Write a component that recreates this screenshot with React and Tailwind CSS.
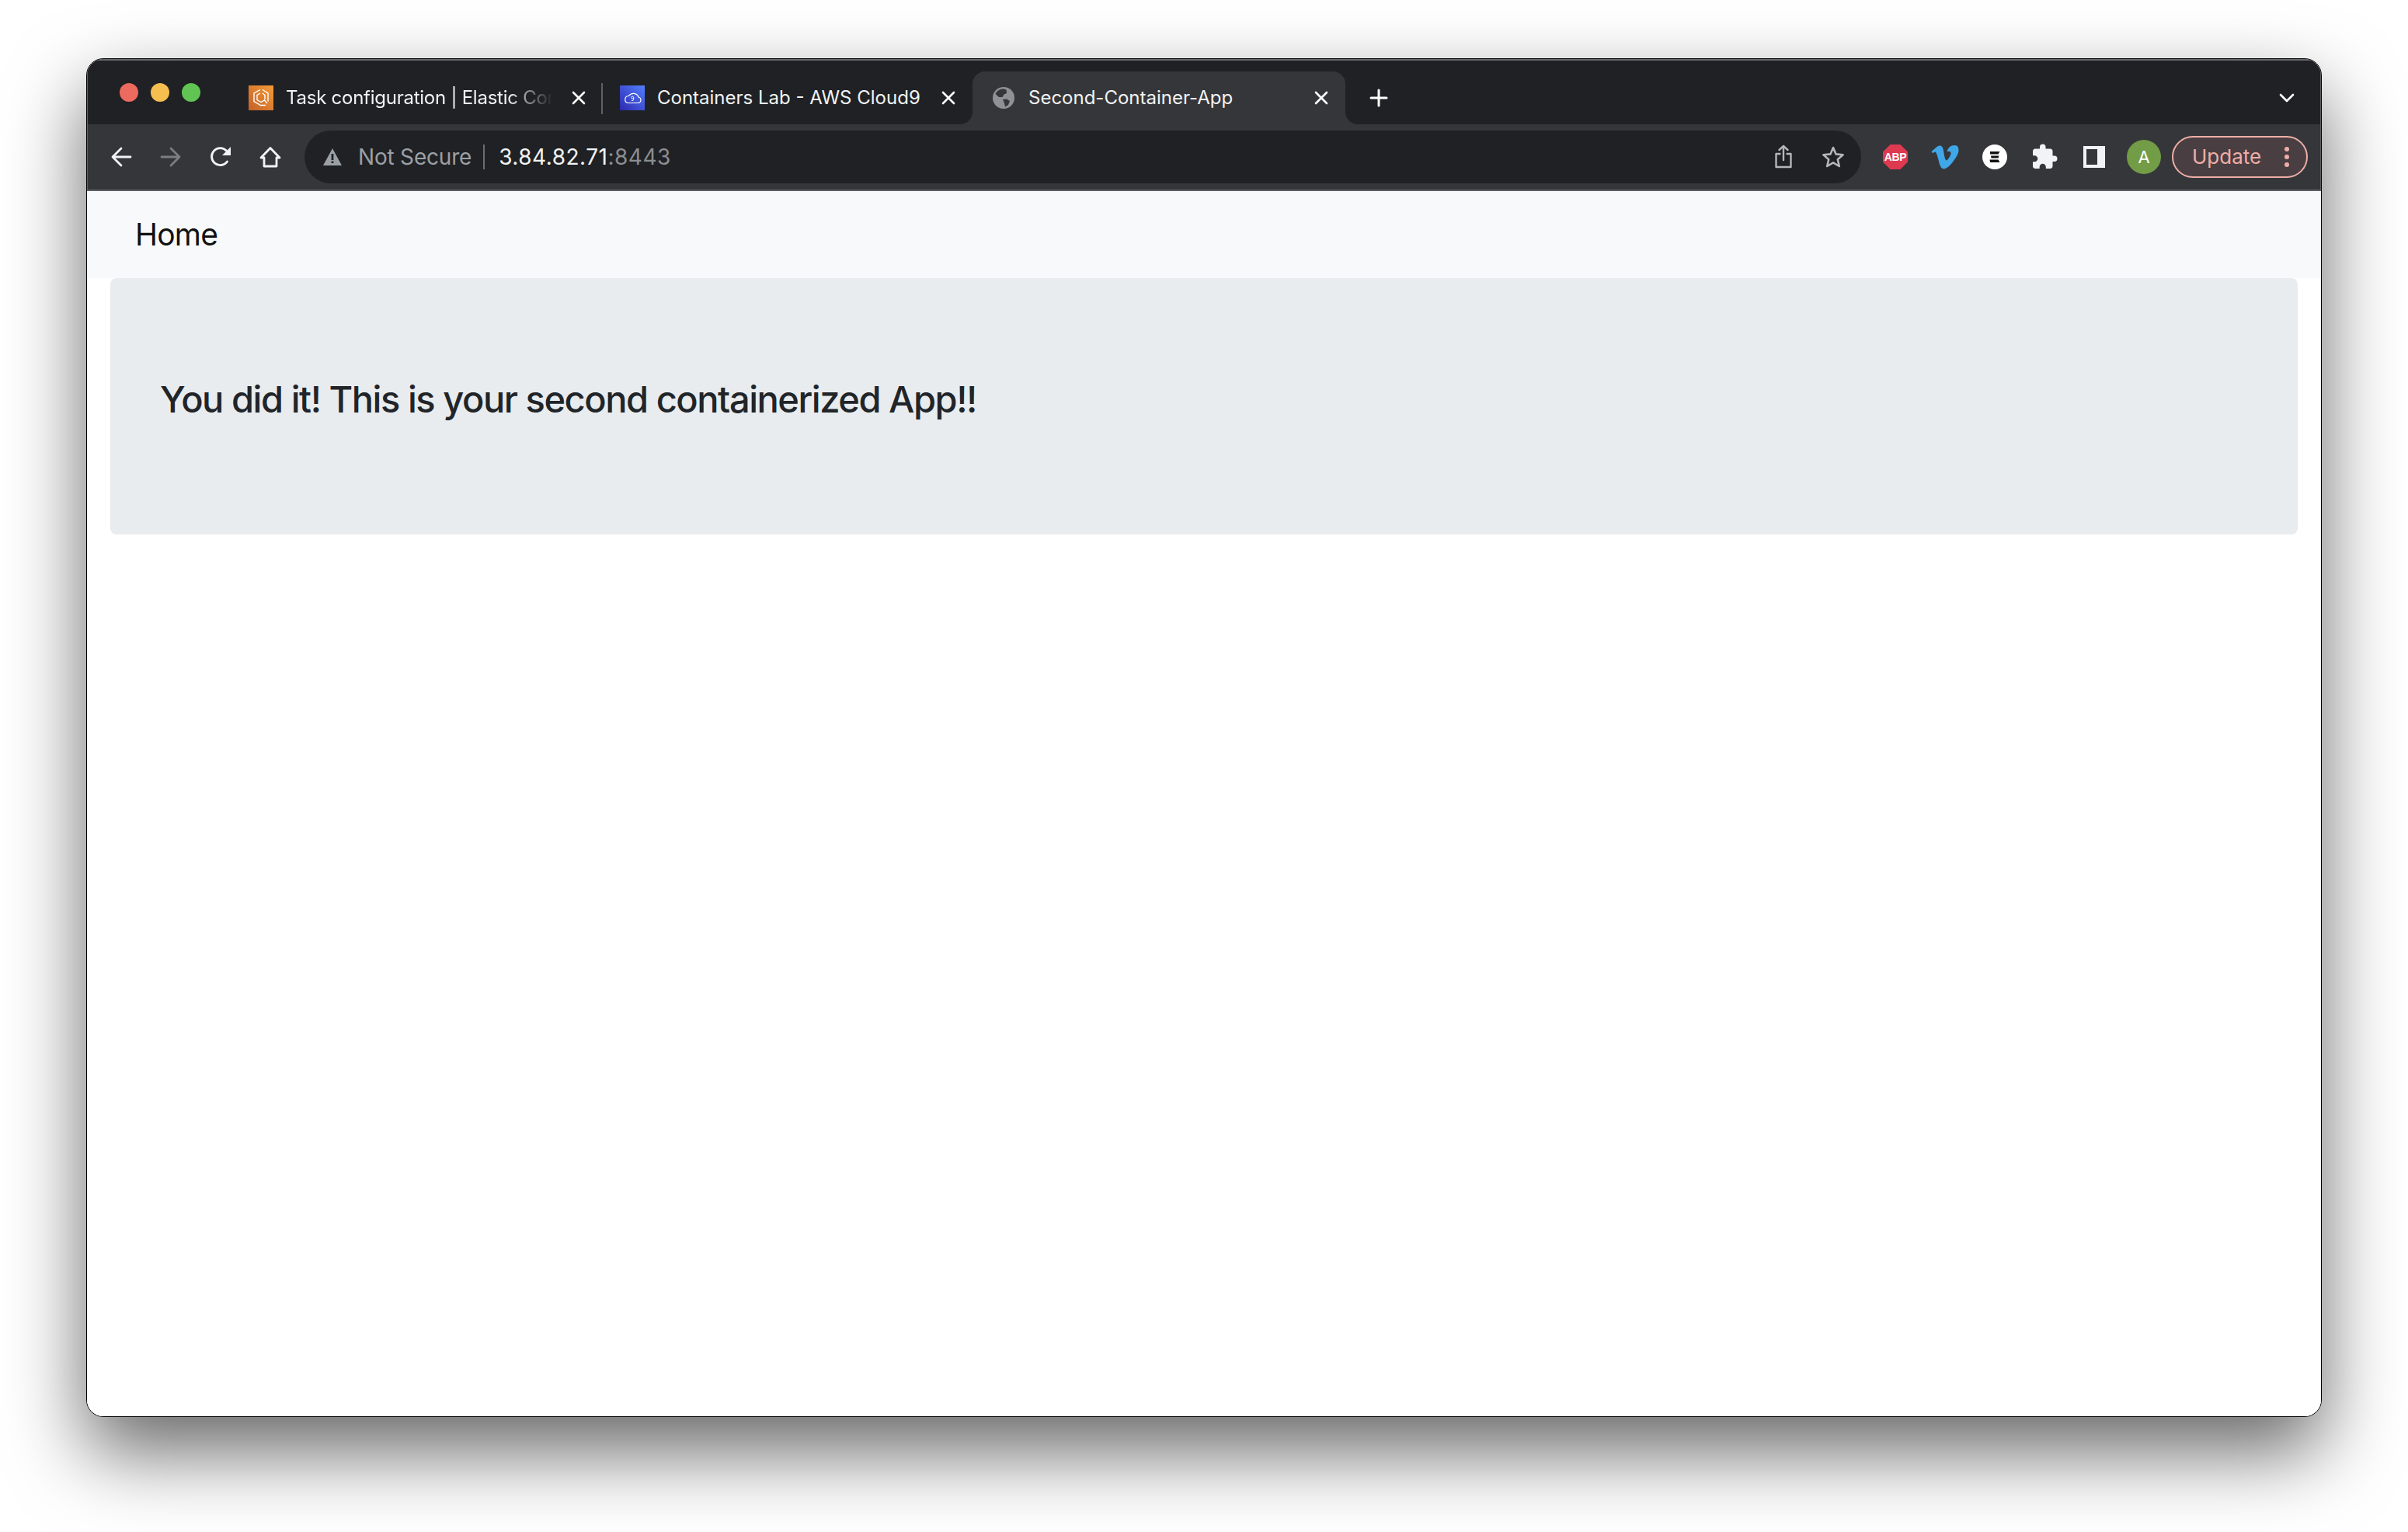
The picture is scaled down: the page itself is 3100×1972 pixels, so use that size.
import React from "react";
import { FaVimeoV } from "react-icons/fa";
import { MdExtension } from "react-icons/md";

const Close = ({ className = "" }) => (
  <svg viewBox="0 0 20 20" className={`w-5 h-5 shrink-0 ${className}`} fill="none" stroke="#fff" strokeWidth="2.6" strokeLinecap="round">
    <path d="M3 3 L17 17 M17 3 L3 17" />
  </svg>
);

const TaskIcon = () => (
  <svg viewBox="0 0 32 32" className="w-8 h-8 shrink-0">
    <defs>
      <linearGradient id="o" x1="0" y1="1" x2="1" y2="0">
        <stop offset="0" stopColor="#c4602a" />
        <stop offset="1" stopColor="#f39c36" />
      </linearGradient>
    </defs>
    <rect width="32" height="32" fill="url(#o)" />
    <path d="M15 5.5 L7 10 V20.5 L15.5 25.5 L22 25.5 M18 5.5 L25 10 V20.5" fill="none" stroke="#fff" strokeWidth="1.4" />
    <path d="M15 10 L11 12.5 V18.5 L16 21.5 L20.5 19 L24 23 M18 10 L21 12.5 V18" fill="none" stroke="#fff" strokeWidth="1.4" />
  </svg>
);

const CloudIcon = () => (
  <svg viewBox="0 0 32 32" className="w-8 h-8 shrink-0">
    <defs>
      <linearGradient id="b" x1="0" y1="1" x2="1" y2="0">
        <stop offset="0" stopColor="#2e27ad" />
        <stop offset="1" stopColor="#527fff" />
      </linearGradient>
    </defs>
    <rect width="32" height="32" fill="url(#b)" />
    <path d="M10 22.5 H23 A3.8 3.8 0 0 0 24 15 A7 7 0 0 0 11.5 13.5 A4.6 4.6 0 0 0 10 22.5 Z" fill="none" stroke="#fff" strokeWidth="1.2" />
    <circle cx="16.2" cy="15.6" r="1.5" fill="none" stroke="#fff" strokeWidth="0.9" />
    <path d="M17.7 15.6 V18 Q17.5 20 15 19.6" fill="none" stroke="#fff" strokeWidth="0.9" />
  </svg>
);

const Globe = () => (
  <svg viewBox="0 0 28 28" className="w-7 h-7 shrink-0">
    <circle cx="14" cy="14" r="14" fill="#8e9196" />
    <path d="M12 2.5 C8 3 5 5.5 3.5 9 L8 13 L12.5 13 L14.5 9.5 L18 8 L17.5 3.5 C16 2.8 14 2.3 12 2.5 Z" fill="#35363a" />
    <path d="M13 16 L18 15.5 L22 18 L20 23 L16 25.5 L15 21 Z" fill="#35363a" />
  </svg>
);

function Tab({ icon, text, w, pl, gap, fade, active }) {
  return (
    <div className={`relative flex items-center h-[68px] ${w} ${pl} ${active ? "bg-[#35363a] rounded-t-2xl" : ""}`}>
      {active && (
        <>
          <span className="absolute bottom-0 -left-4 w-4 h-4 bg-[radial-gradient(circle_at_0_0,#202124_15.5px,#35363a_16.5px)]" />
          <span className="absolute bottom-0 -right-4 w-4 h-4 bg-[radial-gradient(circle_at_100%_0,#202124_15.5px,#35363a_16.5px)]" />
        </>
      )}
      {icon}
      <span className={`flex-1 min-w-0 whitespace-nowrap overflow-hidden text-[24px] leading-8 text-[#f1f3f4] ${gap} ${fade ? "tracking-[-0.25px] [mask-image:linear-gradient(to_right,black_80%,transparent_97%)]" : ""}`}>
        {text}
      </span>
      <Close className="ml-3 mr-[21px]" />
    </div>
  );
}

const Tool = ({ children }) => (
  <div className="w-16 h-16 flex items-center justify-center shrink-0">{children}</div>
);

export default function App() {
  return (
    <div className="w-[3100px] h-[1972px] pl-[111px] pt-[75px] bg-white overflow-hidden font-['Inter','Liberation_Sans',sans-serif]">
      <div className="w-[2878px] h-[1749px] rounded-[22px] border border-black bg-white overflow-hidden flex flex-col shadow-[0_44px_100px_rgba(0,0,0,0.6)]">
        {/* tab strip */}
        <div className="h-[84px] shrink-0 bg-[#202124] border-t-2 border-[#66676a] shadow-[inset_1px_0_#5f6064,inset_-1px_0_#5f6064] flex items-end relative">
          <div className="flex gap-4 pl-[42px] w-[184px] self-start pt-[29px] shrink-0">
            <span className="w-6 h-6 rounded-full bg-[#ed6a5e] shrink-0" />
            <span className="w-6 h-6 rounded-full bg-[#f4bf4f] shrink-0" />
            <span className="w-6 h-6 rounded-full bg-[#61c554] shrink-0" />
          </div>
          <Tab icon={<TaskIcon />} text="Task configuration | Elastic Con" w="w-[480px]" pl="pl-6" gap="ml-4" fade />
          <div className="w-[2px] h-10 bg-[#5f6064] self-end mb-[13px] -ml-[2px] shrink-0" />
          <Tab icon={<CloudIcon />} text="Containers Lab - AWS Cloud9" w="w-[476px]" pl="pl-[22px]" gap="ml-4" />
          <Tab icon={<Globe />} text="Second-Container-App" w="w-[480px]" pl="pl-[26px]" gap="ml-[18px]" active />
          <svg viewBox="0 0 24 24" className="w-6 h-6 ml-[31px] mb-[22px] shrink-0" fill="none" stroke="#fff" strokeWidth="3" strokeLinecap="round">
            <path d="M12 2 V22 M2 12 H22" />
          </svg>
          <div className="flex-1" />
          <svg viewBox="0 0 20 12" className="w-5 h-3 mr-[34px] mb-[28px] shrink-0" fill="none" stroke="#fff" strokeWidth="2.6" strokeLinecap="round" strokeLinejoin="round">
            <path d="M2 2 L10 10 L18 2" />
          </svg>
        </div>
        {/* toolbar */}
        <div className="h-[86px] shrink-0 bg-[#35363a] border-b-2 border-[#5f6064] shadow-[inset_1px_0_#5f6064,inset_-1px_0_#5f6064] flex items-center pl-3">
          <Tool>
            <svg viewBox="0 0 28 28" className="w-7 h-7" fill="none" stroke="#f1f3f4" strokeWidth="2.8" strokeLinecap="round" strokeLinejoin="round">
              <path d="M26 14 H3 M14 3 L3 14 L14 25" />
            </svg>
          </Tool>
          <Tool>
            <svg viewBox="0 0 28 28" className="w-7 h-7" fill="none" stroke="#7b7d81" strokeWidth="2.8" strokeLinecap="round" strokeLinejoin="round">
              <path d="M2 14 H25 M14 3 L25 14 L14 25" />
            </svg>
          </Tool>
          <Tool>
            <svg viewBox="0 0 28 28" className="w-7 h-7" fill="none">
              <path d="M22.5 20 A11 11 0 1 1 21.5 6" stroke="#f1f3f4" strokeWidth="2.8" strokeLinecap="round" />
              <path d="M27 1 V12 H16 Z" fill="#f1f3f4" />
            </svg>
          </Tool>
          <Tool>
            <svg viewBox="0 0 28 28" className="w-7 h-7" fill="none" stroke="#f1f3f4" strokeWidth="2.8" strokeLinejoin="round">
              <path d="M14 2.5 L26 15 H22 V26 H6 V15 H2 Z" />
            </svg>
          </Tool>
          <div className="ml-3 w-[2004px] h-[68px] rounded-full bg-[#202124] flex items-center pl-6 shrink-0">
            <svg viewBox="0 0 24 22" className="w-6 h-[22px] shrink-0">
              <path d="M12 0 L24 22 H0 Z" fill="#9aa0a6" />
              <path d="M10.6 7 H13.4 V15 H10.6 Z M10.6 16.5 H13.4 V19 H10.6 Z" fill="#202124" />
            </svg>
            <span className="ml-[21px] text-[28px] leading-9 text-[#9aa0a6] tracking-[-0.2px] whitespace-nowrap">Not Secure</span>
            <span className="ml-[15px] w-[2px] h-8 bg-[#6b6d70] shrink-0" />
            <span className="ml-[18px] text-[28px] leading-9 text-[#f1f3f4] tracking-[0.5px] whitespace-nowrap">
              3.84.82.71<span className="text-[#8b8e92]">:8443</span>
            </span>
            <div className="flex-1" />
            <svg viewBox="0 0 24 32" className="w-6 h-8 shrink-0 mr-[37px]" fill="none" stroke="#b4b6b9" strokeWidth="2.4" strokeLinecap="round" strokeLinejoin="round">
              <path d="M12 20 V2 M6.5 7 L12 2 L17.5 7 M7.5 12 H2.5 V29 H21.5 V12 H16.5" />
            </svg>
            <svg viewBox="0 0 30 30" className="w-[30px] h-[30px] shrink-0 mr-[21px]" fill="none" stroke="#b4b6b9" strokeWidth="2.6" strokeLinejoin="round">
              <path d="M15 3 L18.6 11.4 L27.6 12.2 L20.8 18.2 L22.8 27 L15 22.4 L7.2 27 L9.2 18.2 L2.4 12.2 L11.4 11.4 Z" />
            </svg>
          </div>
          <div className="ml-3 flex shrink-0">
            <Tool>
              <span className="w-8 h-8 bg-[#dd3a50] [clip-path:polygon(30%_0,70%_0,100%_30%,100%_70%,70%_100%,30%_100%,0_70%,0_30%)] flex items-center justify-center text-white text-[14px] font-bold font-['Liberation_Sans'] tracking-[-0.3px]">ABP</span>
            </Tool>
            <Tool>
              <FaVimeoV className="w-10 h-10 text-[#3fa7e8]" />
            </Tool>
            <Tool>
              <svg viewBox="0 0 32 32" className="w-8 h-8">
                <circle cx="16" cy="16" r="16" fill="#fff" />
                <path d="M10 9 H22.5 L20.5 12.5 H10 Z M11 14.5 H21.5 L20.5 17.5 H11.5 Z M9.5 19.5 H20.5 L22.5 23 H10 Z" fill="#111" />
              </svg>
            </Tool>
            <Tool>
              <MdExtension className="w-9 h-9 text-[#f1f3f4]" />
            </Tool>
            <Tool>
              <span className="w-7 h-7 bg-[#f1f3f4] pl-1 pr-[10px] py-1 flex">
                <span className="flex-1 bg-[#35363a]" />
              </span>
            </Tool>
            <Tool>
              <span className="w-11 h-11 rounded-full bg-[#739c46] text-white text-[22px] flex items-center justify-center">A</span>
            </Tool>
          </div>
          <div className="ml-1 w-[175px] h-[54px] rounded-full border-2 border-[#eeaea7] bg-[#493f42] flex items-center pl-6 shrink-0">
            <span className="text-[26px] leading-8 text-[#eeaea7] whitespace-nowrap">Update</span>
            <span className="ml-[30px] flex flex-col gap-[4px]">
              <span className="w-[6px] h-[6px] rounded-full bg-[#eeaea7]" />
              <span className="w-[6px] h-[6px] rounded-full bg-[#eeaea7]" />
              <span className="w-[6px] h-[6px] rounded-full bg-[#eeaea7]" />
            </span>
          </div>
        </div>
        {/* page */}
        <div className="flex-1 bg-white">
          <nav className="h-[112px] bg-[#f8f9fa] flex items-center pl-[62px]">
            <span className="text-[39px] leading-[60px] text-[#111] tracking-[-0.8px]">Home</span>
          </nav>
          <div className="mx-[30px] h-[330px] rounded-[8px] bg-[#e9ecef] pl-[64px] pt-[126px]">
            <h3 className="text-[47px] leading-[60px] font-medium text-[#212529] tracking-[-1.45px]">
              You did it! This is your second containerized App!!
            </h3>
          </div>
        </div>
      </div>
    </div>
  );
}
